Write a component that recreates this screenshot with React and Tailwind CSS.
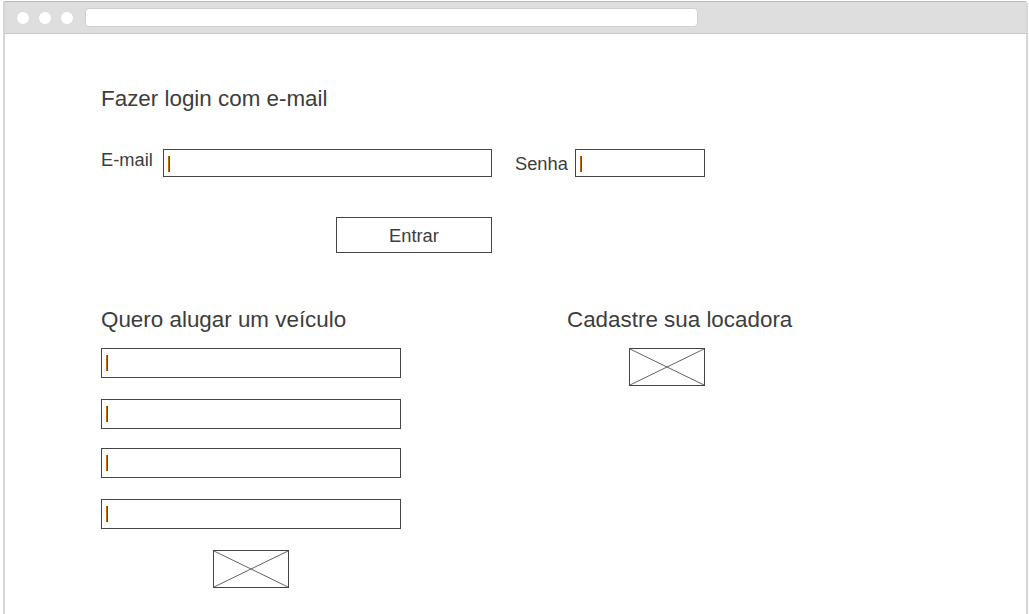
import React from "react";

const Cursor = ({ left = 4 }) => (
  <div className="flex h-[16px] mt-[6px]" style={{ marginLeft: left }}>
    <div className="w-[1px] h-full bg-[#c26a00]" />
    <div className="w-[1px] h-full bg-[#5a4a3a]" />
  </div>
);

const Input = ({ className = "", cursorLeft = 4 }) => (
  <div className={`border border-[#454545] bg-white flex items-start ${className}`}>
    <Cursor left={cursorLeft} />
  </div>
);

const Placeholder = ({ className = "" }) => (
  <div className={`relative w-[76px] h-[38px] border border-[#454545] ${className}`}>
    <svg className="absolute inset-0 w-full h-full" viewBox="0 0 74 36" preserveAspectRatio="none">
      <line x1="0" y1="0" x2="74" y2="36" stroke="#636363" strokeWidth="1" />
      <line x1="74" y1="0" x2="0" y2="36" stroke="#636363" strokeWidth="1" />
    </svg>
  </div>
);

export default function App() {
  return (
    <div
      className="w-[1029px] h-[614px] bg-white pl-[3px] pt-[1px] overflow-hidden text-[#3d3d3d]"
      style={{ fontFamily: '"Liberation Sans", Arial, sans-serif' }}
    >
      <div className="w-[1025px] h-[613px] border-t border-t-[#b9b9b9] border-l-2 border-r-2 border-l-[#d6d6d6] border-r-[#d6d6d6] rounded-tr-[4px] flex flex-col">
        {/* Title bar */}
        <div className="h-[32px] shrink-0 bg-[#dedede] border-b border-b-[#c9c9c9] flex items-start pt-[6px] pl-[12px]">
          <div className="flex gap-[10px] mt-[4px]">
            <div className="w-[12px] h-[12px] rounded-full bg-white" />
            <div className="w-[12px] h-[12px] rounded-full bg-white" />
            <div className="w-[12px] h-[12px] rounded-full bg-white" />
          </div>
          <div className="ml-[12px] w-[613px] h-[19px] bg-white rounded-[4px] border border-[#d0d0d0]" />
        </div>

        {/* Content */}
        <div className="flex-1 pl-[96px] flex flex-col items-start">
          <h1 className="mt-[52px] text-[22.4px] leading-[26px] font-normal">Fazer login com e-mail</h1>

          <div className="mt-[37px] flex items-start">
            <div className="w-[62px] text-[18.3px] leading-[21px]">E-mail</div>
            <Input className="w-[329px] h-[28px]" cursorLeft={4} />
            <div className="ml-[23px] w-[60px] text-[18.3px] leading-[21px] mt-[4px]">Senha</div>
            <Input className="w-[130px] h-[28px]" cursorLeft={4} />
          </div>

          <button className="mt-[40px] ml-[235px] w-[156px] h-[36px] border border-[#454545] bg-white text-[18.3px] leading-[21px] text-[#3d3d3d] flex items-center justify-center">
            Entrar
          </button>

          <div className="mt-[54px] flex items-start">
            <div className="w-[466px] flex flex-col items-start">
              <h2 className="text-[22.4px] leading-[26px] font-normal">Quero alugar um veículo</h2>
              <Input className="mt-[15px] w-[300px] h-[30px]" cursorLeft={4} />
              <Input className="mt-[21px] w-[300px] h-[30px]" cursorLeft={4} />
              <Input className="mt-[19px] w-[300px] h-[30px]" cursorLeft={4} />
              <Input className="mt-[21px] w-[300px] h-[30px]" cursorLeft={4} />
              <Placeholder className="mt-[21px] ml-[112px]" />
            </div>
            <div className="flex flex-col items-start">
              <h2 className="text-[22.4px] leading-[26px] font-normal">Cadastre sua locadora</h2>
              <Placeholder className="mt-[15px] ml-[62px]" />
            </div>
          </div>
        </div>
      </div>
    </div>
  );
}
